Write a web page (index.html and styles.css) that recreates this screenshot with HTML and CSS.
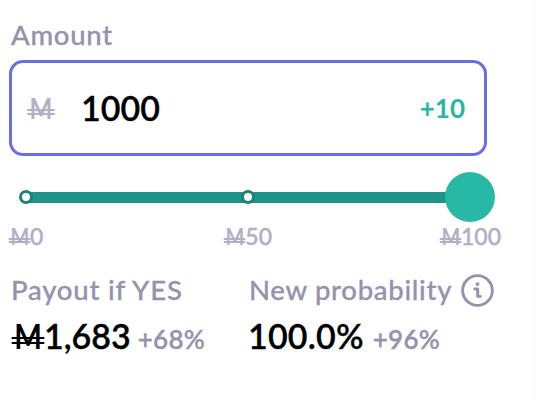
FILE: index.html
```html
<!DOCTYPE html>
<html lang="en">
<head>
  <meta charset="UTF-8">
  <meta name="viewport" content="width=device-width, initial-scale=1.0">
  <title>Place a bet</title>
  <link rel="stylesheet" href="styles.css">
</head>
<body>
  <div class="panel">
    <div class="label amount-label">Amount</div>
    <div class="amount-box">
      <span class="mana">M</span>
      <span class="amount">1000</span>
      <button class="add-btn">+10</button>
    </div>
    <div class="slider">
      <span class="dot"></span>
      <span class="dot"></span>
      <span class="thumb"></span>
    </div>
    <div class="ticks">
      <span class="tick"><span class="mana">M</span>0</span>
      <span class="tick"><span class="mana">M</span>50</span>
      <span class="tick"><span class="mana">M</span>100</span>
    </div>
    <div class="results">
      <div class="result">
        <div class="label payout-label">Payout if YES</div>
        <div class="value"><span class="payout"><span class="mana">M</span>1,683</span><span class="change">+68%</span></div>
      </div>
      <div class="result">
        <div class="label"><span class="prob-label">New probability</span>
          <svg class="info" viewBox="0 0 32 32" fill="none" stroke="currentColor" stroke-width="2.8">
            <circle cx="16" cy="16" r="14.4"/>
            <path d="M13.4 14.5h2.8v7.2h2.6" stroke-linejoin="round" stroke-linecap="round"/>
            <circle cx="16" cy="9.8" r="1.8" fill="currentColor" stroke="none"/>
          </svg>
        </div>
        <div class="value"><span class="prob">100.0%</span><span class="change">+96%</span></div>
      </div>
    </div>
  </div>
</body>
</html>
```

FILE: styles.css
```css
body {
  margin: 0;
  background: #fafaff;
  font-family: Lato, sans-serif;
  font-weight: 500;
}
.panel {
  box-sizing: border-box;
  width: 532px;
  height: 400px;
  padding: 19px 0 0 9px;
  background: #fff;
}
.label {
  display: flex;
  align-items: center;
  height: 32px;
  padding-left: 2px;
  font-size: 27.5px;
  line-height: 32px;
  color: #9493ab;
  -webkit-text-stroke: 0.3px;
  white-space: nowrap;
}
.amount-label {
  letter-spacing: 0.7px;
}
.amount-box {
  box-sizing: border-box;
  display: flex;
  align-items: center;
  width: 478px;
  height: 96px;
  margin-top: 9px;
  padding: 0 19px 0 15px;
  border: 3px solid #6b6ee0;
  border-radius: 14px;
}
.mana {
  position: relative;
  display: inline-block;
  font-weight: 700;
  letter-spacing: 0;
  text-align: center;
  transform: scaleX(0.86);
}
/* double bar across the M */
.mana::after {
  content: "";
  position: absolute;
  left: -8%;
  right: -8%;
  top: 0.76em;
  height: 0.08em;
  border-top: 0.08em solid;
  border-bottom: 0.08em solid;
}
.amount-box .mana {
  width: 28px;
  font-size: 28px;
  line-height: 34px;
  color: #b1b0c6;
}
.amount-box .mana::after {
  top: 18px;
  height: 2px;
  border-width: 2px;
}
.amount {
  margin-left: 26px;
  font-size: 34px;
  font-weight: 600;
  line-height: 40px;
  color: #000;
  -webkit-text-stroke: 0.3px;
}
.add-btn {
  margin-left: auto;
  padding: 0;
  border: none;
  background: none;
  font: 700 26px Lato, sans-serif;
  color: #2bb5a4;
}
.slider {
  box-sizing: border-box;
  display: flex;
  align-items: center;
  justify-content: space-between;
  width: 486px;
  height: 50px;
  margin-top: 16px;
  padding-left: 10px;
  background: linear-gradient(#1f9488, #1f9488) 16px 20px / 445px 11px no-repeat;
}
.dot {
  box-sizing: border-box;
  width: 14px;
  height: 14px;
  border: 3px solid #19837b;
  border-radius: 50%;
  background: #fff;
}
.dot:nth-child(2) {
  margin-left: 18px;
}
.thumb {
  width: 50px;
  height: 50px;
  border-radius: 50%;
  background: #27b8a6;
}
.ticks {
  display: flex;
  justify-content: space-between;
  width: 492px;
  height: 30px;
  font-size: 23px;
  line-height: 29px;
  color: #b1b0c6;
  -webkit-text-stroke: 0.4px;
}
.tick:nth-child(2) {
  margin-left: 13px;
}
.ticks .mana {
  width: 21px;
  -webkit-text-stroke: 0;
}
.ticks .mana::after {
  top: 16px;
  height: 1px;
  border-width: 2px;
}
.results {
  display: flex;
  margin-top: 22px;
}
.result:first-child {
  width: 238px;
}
.payout-label {
  letter-spacing: 0.8px;
}
.prob-label {
  letter-spacing: 0.7px;
}
.info {
  width: 33px;
  height: 33px;
  margin-left: 9px;
}
.value {
  display: flex;
  align-items: baseline;
  height: 46px;
  padding-left: 2px;
  margin-top: 7px;
  line-height: 46px;
  white-space: nowrap;
}
.payout,
.prob {
  font-size: 34px;
  font-weight: 600;
  color: #000;
  -webkit-text-stroke: 0.3px;
}
.prob {
  margin-left: -1px;
  letter-spacing: 0.2px;
}
.payout .mana {
  width: 32px;
  margin-left: 1px;
  -webkit-text-stroke: 0;
}
.payout .mana::after {
  top: 24px;
  height: 3px;
  border-width: 2px;
}
.change {
  margin-left: 7px;
  font-size: 26px;
  font-weight: 600;
  letter-spacing: 0.3px;
  color: #9493ab;
  -webkit-text-stroke: 0.3px;
}
.prob + .change {
  margin-left: 9px;
}
```
